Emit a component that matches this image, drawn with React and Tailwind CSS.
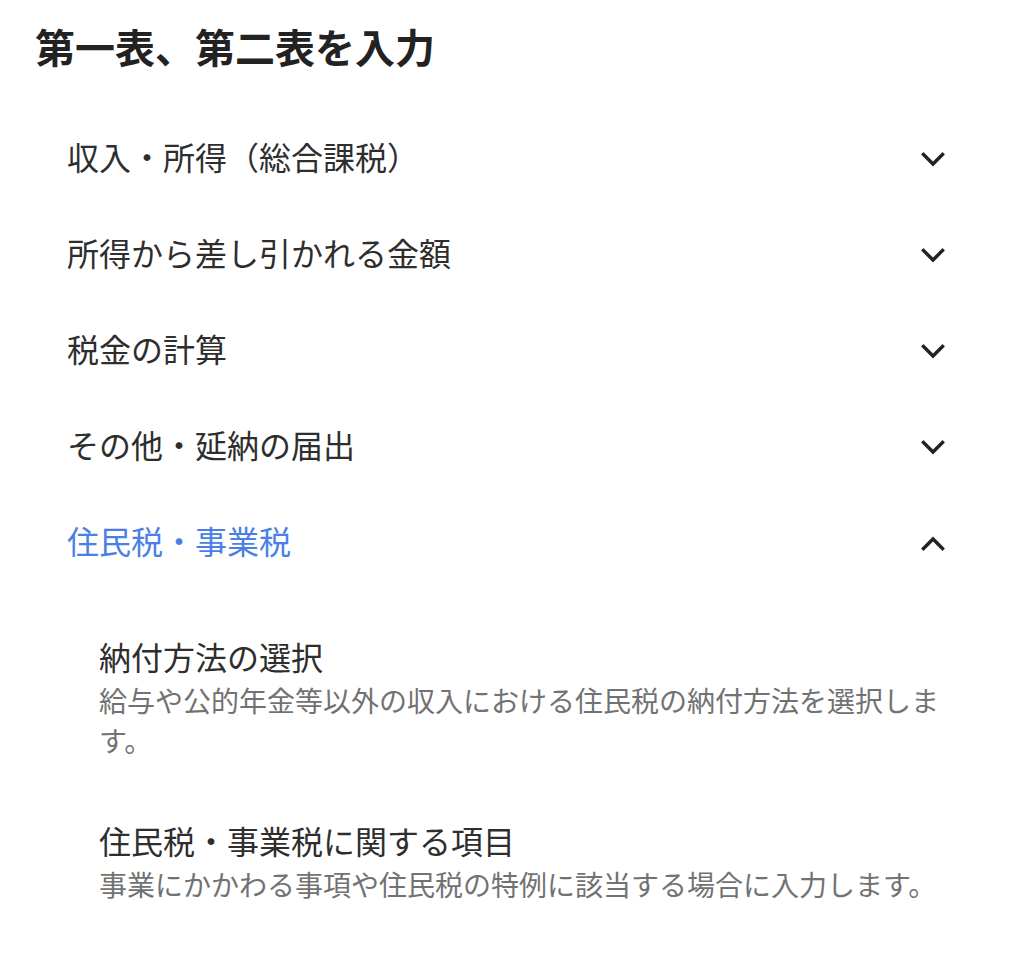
import { useState } from 'react'

const FONT = '"Noto Sans CJK JP", "Noto Sans", sans-serif'

const sections = [
  { id: 'income', label: '収入・所得（総合課税）' },
  { id: 'deduction', label: '所得から差し引かれる金額' },
  { id: 'tax', label: '税金の計算' },
  { id: 'other', label: 'その他・延納の届出' },
  {
    id: 'resident',
    label: '住民税・事業税',
    items: [
      {
        title: '納付方法の選択',
        desc: '給与や公的年金等以外の収入における住民税の納付方法を選択します。',
      },
      {
        title: '住民税・事業税に関する項目',
        desc: '事業にかかわる事項や住民税の特例に該当する場合に入力します。',
      },
    ],
  },
]

function Chevron({ up }) {
  return (
    <svg width="24" height="15" viewBox="0 0 24 15" fill="none" className="mt-[6px] shrink-0">
      <polyline
        points={up ? '2.5,12.5 12,3 21.5,12.5' : '2.5,2.5 12,12 21.5,2.5'}
        stroke="#222"
        strokeWidth="3.4"
        strokeLinecap="square"
        strokeLinejoin="miter"
      />
    </svg>
  )
}

export default function App() {
  const [open, setOpen] = useState('resident')

  return (
    <div className="min-h-[960px] w-[1010px] bg-white" style={{ fontFamily: FONT }}>
      <h1 className="mt-[18px] pl-[35px] text-[40px] leading-[56px] font-bold text-[#222]">
        第一表、第二表を入力
      </h1>

      <div className="mt-[34px] pl-[67px] pr-[65px]">
        {sections.map((s) => {
          const isOpen = open === s.id
          return (
            <div key={s.id}>
              <button
                onClick={() => setOpen(isOpen ? null : s.id)}
                className="flex h-[96px] w-full items-center justify-between text-left"
              >
                <span
                  className={`text-[32px] leading-[44px] ${isOpen ? 'text-[#4a80e6]' : 'text-[#2e2e2e]'}`}
                >
                  {s.label}
                </span>
                <Chevron up={isOpen} />
              </button>

              {isOpen && s.items && (
                <div className="flex flex-col gap-[58px] pt-[46px] pl-[32px]">
                  {s.items.map((it) => (
                    <div key={it.title}>
                      <div className="text-[32px] leading-[44px] text-[#2e2e2e]">{it.title}</div>
                      <p className="mt-[2px] text-[28px] leading-[40px] text-[#727272]">{it.desc}</p>
                    </div>
                  ))}
                </div>
              )}
            </div>
          )
        })}
      </div>
    </div>
  )
}
